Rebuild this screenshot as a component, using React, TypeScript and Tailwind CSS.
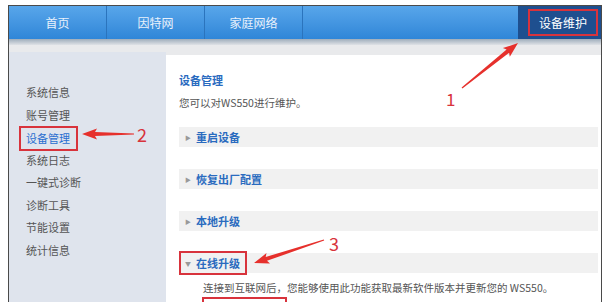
const font = "font-['Noto_Sans_CJK_SC','Liberation_Sans',sans-serif]"

const sideItems = ['系统信息', '账号管理', '设备管理', '系统日志', '一键式诊断', '诊断工具', '节能设置', '统计信息']
const sections = ['重启设备', '恢复出厂配置', '本地升级']

function Arrow({ x1, y1, x2, y2 }: { x1: number; y1: number; x2: number; y2: number }) {
  // tapered arrow from tail (x1,y1) to tip (x2,y2)
  const dx = x2 - x1
  const dy = y2 - y1
  const len = Math.hypot(dx, dy)
  const ux = dx / len
  const uy = dy / len
  const nx = -uy
  const ny = ux
  const head = 13
  const bx = x2 - ux * head
  const by = y2 - uy * head
  const p = (x: number, y: number) => `${x.toFixed(1)},${y.toFixed(1)}`
  const pts = [
    p(x1 + nx * 0.6, y1 + ny * 0.6),
    p(bx + nx * 2, by + ny * 2),
    p(bx + nx * 5.5 - ux * 2, by + ny * 5.5 - uy * 2),
    p(x2, y2),
    p(bx - nx * 5.5 - ux * 2, by - ny * 5.5 - uy * 2),
    p(bx - nx * 2, by - ny * 2),
    p(x1 - nx * 0.6, y1 - ny * 0.6),
  ].join(' ')
  return <polygon points={pts} fill="#e6302c" />
}

export default function App() {
  return (
    <div className={`relative h-[302px] w-[613px] overflow-hidden bg-white ${font}`}>
      <div className="ml-[8px] mt-[5px] flex h-[297px] w-[594px] flex-col border-l border-r border-t border-[#4a4a4a]">
        {/* top nav */}
        <div className="flex h-[33px] shrink-0 bg-gradient-to-b from-[#58a6ea] to-[#2f86d8] text-[12px] text-[#e8f1fb]">
          {['首页', '因特网', '家庭网络'].map((t, i) => (
            <div key={t} className={`flex w-[98px] items-center justify-center border-r border-[#2b74bd] ${i === 0 ? 'w-[96px]' : ''}`}>
              {t}
            </div>
          ))}
          <div className="flex-1" />
          <div className="flex w-[83px] items-center bg-[#1e4f8f] pl-[10px]">
            <div className="flex h-[27px] w-[70px] items-center justify-center border-2 border-[#d8333c] text-[12px] text-white">设备维护</div>
          </div>
        </div>
        <div className="h-[6px] shrink-0 bg-gradient-to-b from-[#9fadbb] to-[#dfe2e6]" />
        <div className="h-[7px] shrink-0 bg-[#e9eaec]" />

        <div className="flex min-h-0 flex-1 overflow-hidden bg-[#e9eaec]">
          {/* sidebar */}
          <div className="w-[157px] shrink-0 bg-[#dfe4ed] pl-[10px] pt-[29px] text-[11px] text-[#555]">
            {sideItems.map((t) => (
              <div key={t} className="h-[22.5px] leading-[22.5px]">
                {t === '设备管理' ? (
                  <span className="inline-block h-[25px] w-[59px] border-2 border-[#d8333c] pl-[5px] leading-[21px] text-[#2a6fd0]">{t}</span>
                ) : (
                  <span className="pl-[7px]">{t}</span>
                )}
              </div>
            ))}
          </div>

          {/* content */}
          <div className="mt-[3px] flex-1 bg-white pl-[13px] pr-[3px] pt-[19px]">
            <div className="text-[11px] font-bold leading-[13px] text-[#2a6bbf]">设备管理</div>
            <div className="mt-[9px] text-[10.5px] leading-[14px] text-[#555]">您可以对WS550进行维护。</div>
            <div className="mt-[17px] flex flex-col gap-[22px]">
              {sections.map((t) => (
                <div key={t} className="flex h-[20px] items-center bg-[#f1f1f1] pl-[6px] text-[11px] font-bold text-[#2a6bbf]">
                  <span className="mr-[5px] text-[6px] text-[#999]">▶</span>
                  {t}
                </div>
              ))}
              <div className="relative flex h-[20px] items-center bg-[#f1f1f1] pl-[6px] text-[11px] font-bold text-[#2a6bbf]">
                <span className="mr-[5px] text-[6px] text-[#999]">▼</span>
                在线升级
                <div className="absolute -top-[2px] left-0 h-[24px] w-[68px] border-2 border-[#d8333c]" />
              </div>
            </div>
            <div className="mt-[8px] pl-[24px] text-[10.5px] leading-[14px] text-[#555]">
              连接到互联网后，您能够使用此功能获取最新软件版本并更新您的 WS550。
            </div>
            <div className="ml-[23px] mt-[2px] h-[20px] w-[85px] border-2 border-[#d8333c]" />
          </div>
        </div>
      </div>

      {/* annotations */}
      <svg className="pointer-events-none absolute inset-0" width="613" height="302">
        <Arrow x1={462} y1={88} x2={518} y2={43} />
        <Arrow x1={134} y1={134} x2={82} y2={134} />
        <Arrow x1={324} y1={240} x2={254} y2={263} />
      </svg>
      <div className="absolute left-[446px] top-[89px] text-[17px] leading-[20px] text-[#d8333c]">1</div>
      <div className="absolute left-[137px] top-[124px] text-[18px] leading-[20px] text-[#d8333c]">2</div>
      <div className="absolute left-[329px] top-[233px] text-[18px] leading-[20px] text-[#d8333c]">3</div>
    </div>
  )
}
